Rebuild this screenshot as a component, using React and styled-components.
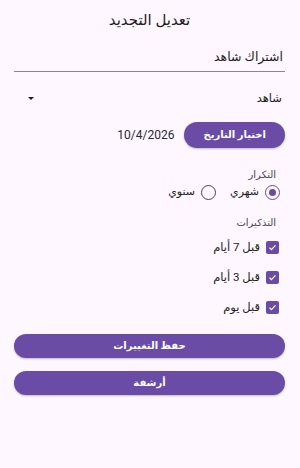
import React from "react";
import styled, { createGlobalStyle } from "styled-components";

const GlobalStyle = createGlobalStyle`
  body {
    margin: 0;
    background: #fef7ff;
    font-family: Roboto, "Noto Sans", "DejaVu Sans", sans-serif;
    color: #1d1b20;
  }
`;

const Page = styled.div`
  direction: rtl;
  width: 300px;
  height: 468px;
  box-sizing: border-box;
  padding: 10px 15px 0 14px;
  display: flex;
  flex-direction: column;
  line-height: 16px;
`;

const Title = styled.h1`
  margin: 0;
  height: 20px;
  font-size: 15px;
  font-weight: 500;
  text-align: center;
  line-height: 20px;
`;

const TextField = styled.div`
  margin-top: 19px;
  height: 16px;
  padding: 0 2px 6px;
  font-size: 12.5px;
  line-height: 16px;
  border-bottom: 1px solid #8a8590;
`;

const Dropdown = styled.div`
  margin-top: 18px;
  height: 16px;
  padding: 0 3px 0 14px;
  display: flex;
  justify-content: space-between;
  align-items: center;
  font-size: 11.5px;
`;

const Caret = styled.span`
  width: 0;
  height: 0;
  border-left: 3.5px solid transparent;
  border-right: 3.5px solid transparent;
  border-top: 3.5px solid #1d1b20;
`;

const DateRow = styled.div`
  margin-top: 16px;
  height: 26px;
  display: flex;
  align-items: center;
  gap: 10px;
`;

const PillButton = styled.button`
  border: none;
  background: #6a4ca6;
  color: #ffffff;
  font-family: inherit;
  font-weight: 700;
  font-size: 10px;
  line-height: 14px;
  height: ${(p) => p.$h || 26}px;
  width: ${(p) => (p.$full ? "100%" : "auto")};
  padding: 0 19px;
  border-radius: 14px;
  box-shadow: 0 1px 2px rgba(0, 0, 0, 0.25);
`;

const DateText = styled.span`
  font-size: 12px;
  color: #2a2730;
`;

const SectionLabel = styled.div`
  margin-top: ${(p) => p.$mt}px;
  height: 14px;
  padding-right: 9px;
  font-size: 10px;
  color: #49454f;
  line-height: 14px;
`;

const RadioRow = styled.div`
  margin-top: 2px;
  height: 16px;
  padding-right: 5px;
  display: flex;
  gap: 14px;
`;

const Option = styled.label`
  display: flex;
  align-items: center;
  gap: 6px;
  font-size: 11px;
  line-height: 16px;
`;

const Radio = styled.span`
  box-sizing: border-box;
  width: 15px;
  height: 15px;
  border-radius: 50%;
  border: 1.5px solid ${(p) => (p.$on ? "#6a4ca6" : "#49454f")};
  display: flex;
  align-items: center;
  justify-content: center;
  &::after {
    content: "";
    width: 7px;
    height: 7px;
    border-radius: 50%;
    background: ${(p) => (p.$on ? "#6a4ca6" : "transparent")};
  }
`;

const CheckList = styled.div`
  margin-top: 10px;
  padding-right: 6px;
  display: flex;
  flex-direction: column;
  gap: 16px;
`;

const CheckItem = styled.label`
  display: flex;
  align-items: center;
  gap: 6px;
  height: 14px;
  font-size: 11.5px;
  line-height: 14px;
`;

const Box = styled.span`
  width: 13px;
  height: 13px;
  border-radius: 2px;
  background: #6a4ca6;
  display: flex;
  align-items: center;
  justify-content: center;
`;

const Actions = styled.div`
  margin-top: 20px;
  display: flex;
  flex-direction: column;
  gap: 13px;
`;

function Check() {
  return (
    <Box>
      <svg width="9" height="9" viewBox="0 0 24 24">
        <path d="M4 12.5l5 5L20 6.5" fill="none" stroke="#fff" strokeWidth="3.2" />
      </svg>
    </Box>
  );
}

export default function App() {
  return (
    <>
      <GlobalStyle />
      <Page>
        <Title>تعديل التجديد</Title>
        <TextField>اشتراك شاهد</TextField>
        <Dropdown>
          <span>شاهد</span>
          <Caret />
        </Dropdown>
        <DateRow>
          <PillButton>اختيار التاريخ</PillButton>
          <DateText>10/4/2026</DateText>
        </DateRow>
        <SectionLabel $mt={20}>التكرار</SectionLabel>
        <RadioRow>
          <Option>
            <Radio $on />
            شهري
          </Option>
          <Option>
            <Radio />
            سنوي
          </Option>
        </RadioRow>
        <SectionLabel $mt={16}>التذكيرات</SectionLabel>
        <CheckList>
          <CheckItem><Check />قبل 7 أيام</CheckItem>
          <CheckItem><Check />قبل 3 أيام</CheckItem>
          <CheckItem><Check />قبل يوم</CheckItem>
        </CheckList>
        <Actions>
          <PillButton $full $h={24}>حفظ التغييرات</PillButton>
          <PillButton $full $h={24}>أرشفة</PillButton>
        </Actions>
      </Page>
    </>
  );
}
